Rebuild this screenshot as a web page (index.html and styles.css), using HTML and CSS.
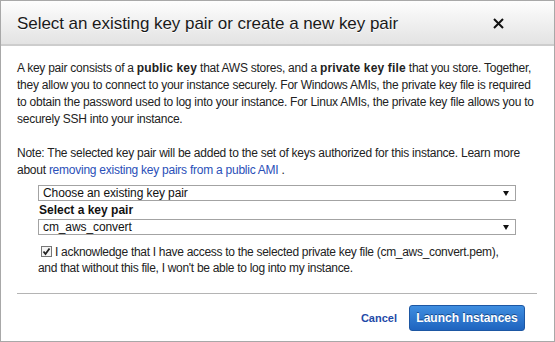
FILE: index.html
```html
<!DOCTYPE html>
<html>
<head>
<meta charset="utf-8">
<link rel="stylesheet" href="styles.css">
</head>
<body>
<div class="dialog">
  <div class="header">
    <div class="title">Select an existing key pair or create a new key pair</div>
    <svg class="close" width="11" height="11" viewBox="0 0 11 11"><path d="M1 1L10 10M10 1L1 10" stroke="#111" stroke-width="2"/></svg>
  </div>
  <div class="body">
    <p class="para">A key pair consists of a <b>public key</b> that AWS stores, and a <b>private key file</b> that you store. Together,<br>they allow you to connect to your instance securely. For Windows AMIs, the private key file is required<br>to obtain the password used to log into your instance. For Linux AMIs, the private key file allows you to<br>securely SSH into your instance.</p>
    <p class="para note">Note: The selected key pair will be added to the set of keys authorized for this instance. Learn more<br>about <a class="link">removing existing key pairs from a public AMI</a> .</p>
    <div class="form">
      <div class="select"><span>Choose an existing key pair</span><span class="arrow"></span></div>
      <div class="label">Select a key pair</div>
      <div class="select"><span>cm_aws_convert</span><span class="arrow"></span></div>
      <div class="ack">
        <span class="check"><svg width="9" height="9" viewBox="0 0 9 9"><path d="M1.5 4.5L3.5 7L7.5 1.5" fill="none" stroke="#222" stroke-width="1.8"/></svg></span> I acknowledge that I have access to the selected private key file (cm_aws_convert.pem),<br>and that without this file, I won't be able to log into my instance.
      </div>
    </div>
  </div>
  <div class="footer">
    <a class="cancel">Cancel</a>
    <button class="launch">Launch Instances</button>
  </div>
</div>
</body>
</html>
```

FILE: styles.css
```css
html, body {
  margin: 0;
  padding: 0;
  background: #fff;
}
.dialog {
  width: 555px;
  height: 342px;
  box-sizing: border-box;
  border: 1px solid #a8a8a8;
  font-family: "Liberation Sans", Arial, sans-serif;
  display: flex;
  flex-direction: column;
}
.header {
  height: 43px;
  background: linear-gradient(#fdfdfd, #e3e3e3);
  border-bottom: 2px solid #cdcdcd;
  display: flex;
  align-items: center;
  justify-content: space-between;
  padding: 0 50px 0 16px;
}
.title {
  font-size: 17px;
  color: #1a1a1a;
  text-shadow: 0 1px 0 #fff;
  padding-top: 2px;
  letter-spacing: -0.05px;
}
.close {
  display: block;
  margin-top: 1px;
}
.body {
  padding: 14px 0 0 0;
  margin: 0 17px 0 16px;
  border-bottom: 1px solid #b4b4b4;
  flex: 1;
}
.para {
  margin: 0;
  font-size: 12px;
  line-height: 17px;
  color: #222;
  white-space: nowrap;
  letter-spacing: -0.25px;
}
.para b {
  letter-spacing: 0.15px;
}
.note {
  margin-top: 17px;
}
.link {
  color: #2a4fb8;
}
.form {
  margin: 6px 21px 0 21px;
}
.select {
  height: 16px;
  box-sizing: border-box;
  border: 1px solid #a3a3a3;
  font-size: 12px;
  line-height: 14px;
  color: #111;
  padding: 0 4px;
  display: flex;
  justify-content: space-between;
  align-items: center;
  letter-spacing: -0.1px;
}
.arrow {
  width: 0;
  height: 0;
  border-left: 3px solid transparent;
  border-right: 3px solid transparent;
  border-top: 5px solid #111;
  margin-right: 2px;
}
.label {
  font-size: 12px;
  font-weight: bold;
  color: #111;
  line-height: 18px;
  padding-left: 1px;
}
.ack {
  margin-top: 9px;
  font-size: 12px;
  line-height: 16px;
  color: #222;
  white-space: nowrap;
  letter-spacing: -0.3px;
}
.check {
  display: inline-block;
  width: 9px;
  height: 9px;
  border: 1px solid #777;
  background: #f4f4f4;
  vertical-align: -1px;
  margin-left: 3px;
}
.check svg {
  display: block;
}
.footer {
  height: 47px;
  display: flex;
  align-items: center;
  justify-content: flex-end;
  padding-right: 29px;
  gap: 12px;
}
.cancel {
  font-size: 11px;
  font-weight: bold;
  color: #1f4aa8;
  margin-top: 1px;
}
.launch {
  width: 116px;
  height: 26px;
  border: 1px solid #1d57a3;
  border-radius: 3px;
  background: linear-gradient(#3f8ee0, #1f64bf);
  color: #fff;
  font-family: "Liberation Sans", Arial, sans-serif;
  font-size: 12px;
  font-weight: bold;
  text-shadow: 0 -1px 0 #174a8c;
  padding: 0;
  margin-top: 1px;
}
```
